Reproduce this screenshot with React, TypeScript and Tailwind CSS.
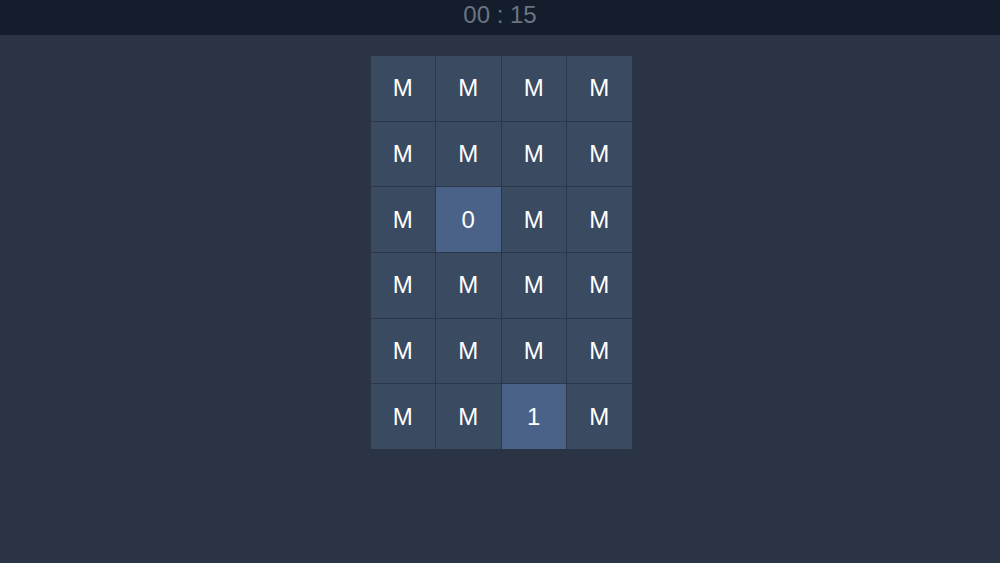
import React from "react";

const board = [
  ["M", "M", "M", "M"],
  ["M", "M", "M", "M"],
  ["M", "0", "M", "M"],
  ["M", "M", "M", "M"],
  ["M", "M", "M", "M"],
  ["M", "M", "1", "M"],
];

export default function App() {
  return (
    <div
      className="w-[1000px] h-[563px] bg-[#2a3445] flex flex-col"
      style={{ fontFamily: '"Liberation Sans", Arial, sans-serif' }}
    >
      <div className="h-[35px] bg-[#131d2c] flex justify-center pt-[3px]">
        <span className="text-[24px] text-[#6b7482] leading-none">00 : 15</span>
      </div>
      <div className="flex justify-center pt-[21px] pl-[2px]">
        <div className="grid grid-cols-[repeat(4,64.5px)] gap-px bg-[#2c384a]">
          {board.flat().map((v, i) => (
            <div
              key={i}
              className={`h-[64.7px] flex items-center justify-center text-white text-[24px] ${
                v === "M" ? "bg-[#3a4a61]" : "bg-[#4a6288]"
              }`}
            >
              {v}
            </div>
          ))}
        </div>
      </div>
    </div>
  );
}
